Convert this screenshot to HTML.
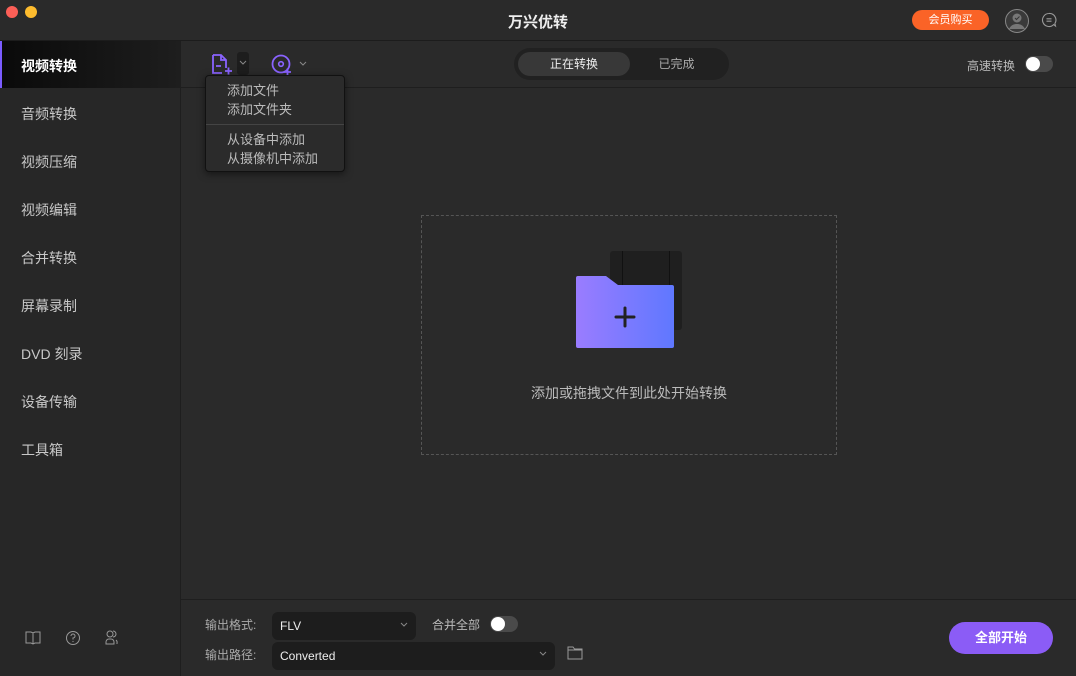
<!DOCTYPE html>
<html><head><meta charset="utf-8"><style>
*{margin:0;padding:0;box-sizing:border-box}
body{width:1076px;height:676px;background:#2a2a2a;font-family:"Liberation Sans","Noto Sans CJK SC",sans-serif;color:#ccc;position:relative;overflow:hidden;font-size:13px}
.abs{position:absolute}
.title{left:0;top:0;width:1076px;height:41px;background:#2a2a2a;border-bottom:1px solid #1c1c1c}
.side{left:0;top:41px;width:181px;height:635px;background:#272727;border-right:1px solid #1e1e1e}
.item{position:absolute;left:21px;font-size:14px;color:#c8c8c8}
.tb{left:181px;top:41px;width:895px;height:47px;border-bottom:1px solid #1e1e1e}
.foot{left:181px;top:599px;width:895px;height:77px;border-top:1px solid #1e1e1e}
.sel{background:#1d1d1d;border-radius:6px;height:28px;color:#eee;padding:0 8px;line-height:28px;font-size:12px}
.tog{width:28px;height:16px;border-radius:8px;background:#4a4a4a}
.tog:after{content:"";position:absolute;left:1px;top:1px;width:14px;height:14px;border-radius:50%;background:#fff}
</style></head><body>
<div class="abs title"></div>
<div class="abs" style="left:6px;top:6px;width:12px;height:12px;border-radius:50%;background:#fc5f57"></div>
<div class="abs" style="left:25px;top:6px;width:12px;height:12px;border-radius:50%;background:#fdbc2e"></div>
<div class="abs" style="left:0;top:11px;width:1076px;text-align:center;font-size:15px;color:#eee;font-weight:bold">万兴优转</div>
<div class="abs" style="left:912px;top:10px;width:77px;height:20px;border-radius:10px;background:#fa6327;color:#fff;font-size:11px;text-align:center;line-height:20px">会员购买</div>
<svg class="abs" style="left:1004px;top:8px" width="26" height="26" viewBox="0 0 26 26"><circle cx="13" cy="13" r="11.5" fill="#3a3a3a" stroke="#888" stroke-width="1"/><circle cx="13" cy="10" r="4.5" fill="#777"/><path d="M5 21c2-4 5-5 8-5s6 1 8 5" fill="#777"/><path d="M11 10l1.5 1.5 3-3" stroke="#333" fill="none"/></svg>
<svg class="abs" style="left:1041px;top:12px" width="16" height="16" viewBox="0 0 16 16"><path d="M8 1.5a6.5 6.5 0 1 0 4.6 11.1l1.9 1.4-.6-2.5A6.5 6.5 0 0 0 8 1.5z" fill="none" stroke="#999" stroke-width="1.1"/><path d="M5.5 6.8h5M5.5 9.2h5" stroke="#999" stroke-width="1.1"/></svg>

<div class="abs side"></div>
<div class="abs" style="left:0;top:41px;width:181px;height:47px;background:linear-gradient(90deg,#0a0a0a,#1e1e1e);border-left:2px solid #7b5cff"></div>
<div class="item" style="top:56px;color:#fff;font-weight:bold">视频转换</div>
<div class="item" style="top:104px">音频转换</div>
<div class="item" style="top:152px">视频压缩</div>
<div class="item" style="top:200px">视频编辑</div>
<div class="item" style="top:248px">合并转换</div>
<div class="item" style="top:296px">屏幕录制</div>
<div class="item" style="top:344px">DVD 刻录</div>
<div class="item" style="top:392px">设备传输</div>
<div class="item" style="top:440px">工具箱</div>
<svg class="abs" style="left:24px;top:629px" width="100" height="18" viewBox="0 0 100 18"><path d="M2 3h5l2 1 2-1h5v11h-5l-2 1-2-1H2z M9 4v11" fill="none" stroke="#999" stroke-width="1"/><circle cx="49" cy="9" r="6.5" fill="none" stroke="#999"/><path d="M47 7a2 2 0 1 1 2 2v1.5" fill="none" stroke="#999"/><circle cx="49" cy="12.5" r=".6" fill="#999"/><circle cx="86" cy="5" r="3" fill="none" stroke="#999"/><path d="M82 15v-2a3 3 0 0 1 3-3h2a3 3 0 0 1 3 3v2z" fill="none" stroke="#999"/><path d="M89 2a3 3 0 0 1 0 6M92 11a3 3 0 0 1 1 3v1" fill="none" stroke="#999"/></svg>

<div class="abs tb"></div>
<svg class="abs" style="left:211px;top:53px" width="22" height="24" viewBox="0 0 22 24"><path d="M2 2h8l5 5v8M10 2v5h5M2 2v18h9" fill="none" stroke="#8a63ff" stroke-width="1.8"/><path d="M5 13h5M14 18h7M17.5 14.5v7" stroke="#8a63ff" stroke-width="1.8"/></svg>
<div class="abs" style="left:237px;top:52px;width:12px;height:23px;background:#1d1d1d;border-radius:3px"></div>
<svg class="abs" style="left:239px;top:60px" width="8" height="6"><path d="M1 1l3 3 3-3" fill="none" stroke="#888"/></svg>
<svg class="abs" style="left:270px;top:53px" width="24" height="24" viewBox="0 0 24 24"><circle cx="11" cy="11" r="8.5" fill="none" stroke="#8a63ff" stroke-width="1.8"/><circle cx="11" cy="11" r="2.3" fill="none" stroke="#8a63ff" stroke-width="1.6"/><path d="M14 19h7M17.5 15.5v7" stroke="#8a63ff" stroke-width="1.8"/></svg>
<svg class="abs" style="left:299px;top:61px" width="8" height="6"><path d="M1 1l3 3 3-3" fill="none" stroke="#888"/></svg>

<div class="abs" style="left:514px;top:48px;width:215px;height:32px;background:#212121;border-radius:16px"></div>
<div class="abs" style="left:518px;top:52px;width:112px;height:24px;background:#383838;border-radius:12px;text-align:center;line-height:24px;color:#eee;font-size:12px">正在转换</div>
<div class="abs" style="left:630px;top:52px;width:93px;height:24px;text-align:center;line-height:24px;color:#aaa;font-size:12px">已完成</div>
<div class="abs" style="left:967px;top:57px;font-size:12px;color:#bbb">高速转换</div>
<div class="abs tog" style="left:1025px;top:56px"></div>

<div class="abs" style="left:205px;top:75px;width:140px;height:97px;background:#2b2b2b;border:1px solid #111;border-radius:4px;box-shadow:0 2px 8px rgba(0,0,0,.5)"></div>
<div class="abs" style="left:206px;top:124px;width:138px;height:1px;background:#444"></div>
<div class="abs" style="left:227px;top:81px;font-size:13px;line-height:19px;color:#bbb">添加文件<br>添加文件夹</div>
<div class="abs" style="left:227px;top:130px;font-size:13px;line-height:19px;color:#bbb">从设备中添加<br>从摄像机中添加</div>

<div class="abs" style="left:421px;top:215px;width:416px;height:240px;border:1px dashed #555"></div>
<div class="abs" style="left:610px;top:251px;width:72px;height:79px;background:#1f1f1f;border-radius:3px"></div>
<div class="abs" style="left:622px;top:251px;width:1px;height:79px;background:#111"></div>
<div class="abs" style="left:669px;top:251px;width:1px;height:79px;background:#111"></div>
<svg class="abs" style="left:576px;top:276px" width="98" height="72" viewBox="0 0 98 72"><defs><linearGradient id="g" x1="0" x2="1"><stop offset="0" stop-color="#9a7cff"/><stop offset="1" stop-color="#5f78ff"/></linearGradient></defs><path d="M2 0h28l12 9h54a2 2 0 0 1 2 2v59a2 2 0 0 1-2 2H2a2 2 0 0 1-2-2V2a2 2 0 0 1 2-2z" fill="url(#g)"/><path d="M40 41h18M49 32v18" stroke="#222" stroke-width="3" stroke-linecap="round"/></svg>
<div class="abs" style="left:421px;top:383px;width:416px;text-align:center;font-size:14px;color:#bbb">添加或拖拽文件到此处开始转换</div>

<div class="abs foot"></div>
<div class="abs" style="left:205px;top:616px;font-size:12px;color:#aaa">输出格式:</div>
<div class="abs sel" style="left:272px;top:612px;width:144px">FLV</div>
<svg class="abs" style="left:400px;top:622px" width="8" height="6"><path d="M1 1l3 3 3-3" fill="none" stroke="#888"/></svg>
<div class="abs" style="left:432px;top:616px;font-size:12px;color:#bbb">合并全部</div>
<div class="abs tog" style="left:490px;top:616px"></div>
<div class="abs" style="left:205px;top:646px;font-size:12px;color:#aaa">输出路径:</div>
<div class="abs sel" style="left:272px;top:642px;width:283px">Converted</div>
<svg class="abs" style="left:539px;top:651px" width="8" height="6"><path d="M1 1l3 3 3-3" fill="none" stroke="#888"/></svg>
<svg class="abs" style="left:567px;top:646px" width="16" height="14"><path d="M1 1h5l1.5 2H15v10H1z M1 4h14" fill="none" stroke="#999"/></svg>
<div class="abs" style="left:949px;top:622px;width:104px;height:32px;border-radius:16px;background:#8b5cf6;color:#fff;font-weight:bold;text-align:center;line-height:32px;font-size:13px">全部开始</div>
</body></html>
